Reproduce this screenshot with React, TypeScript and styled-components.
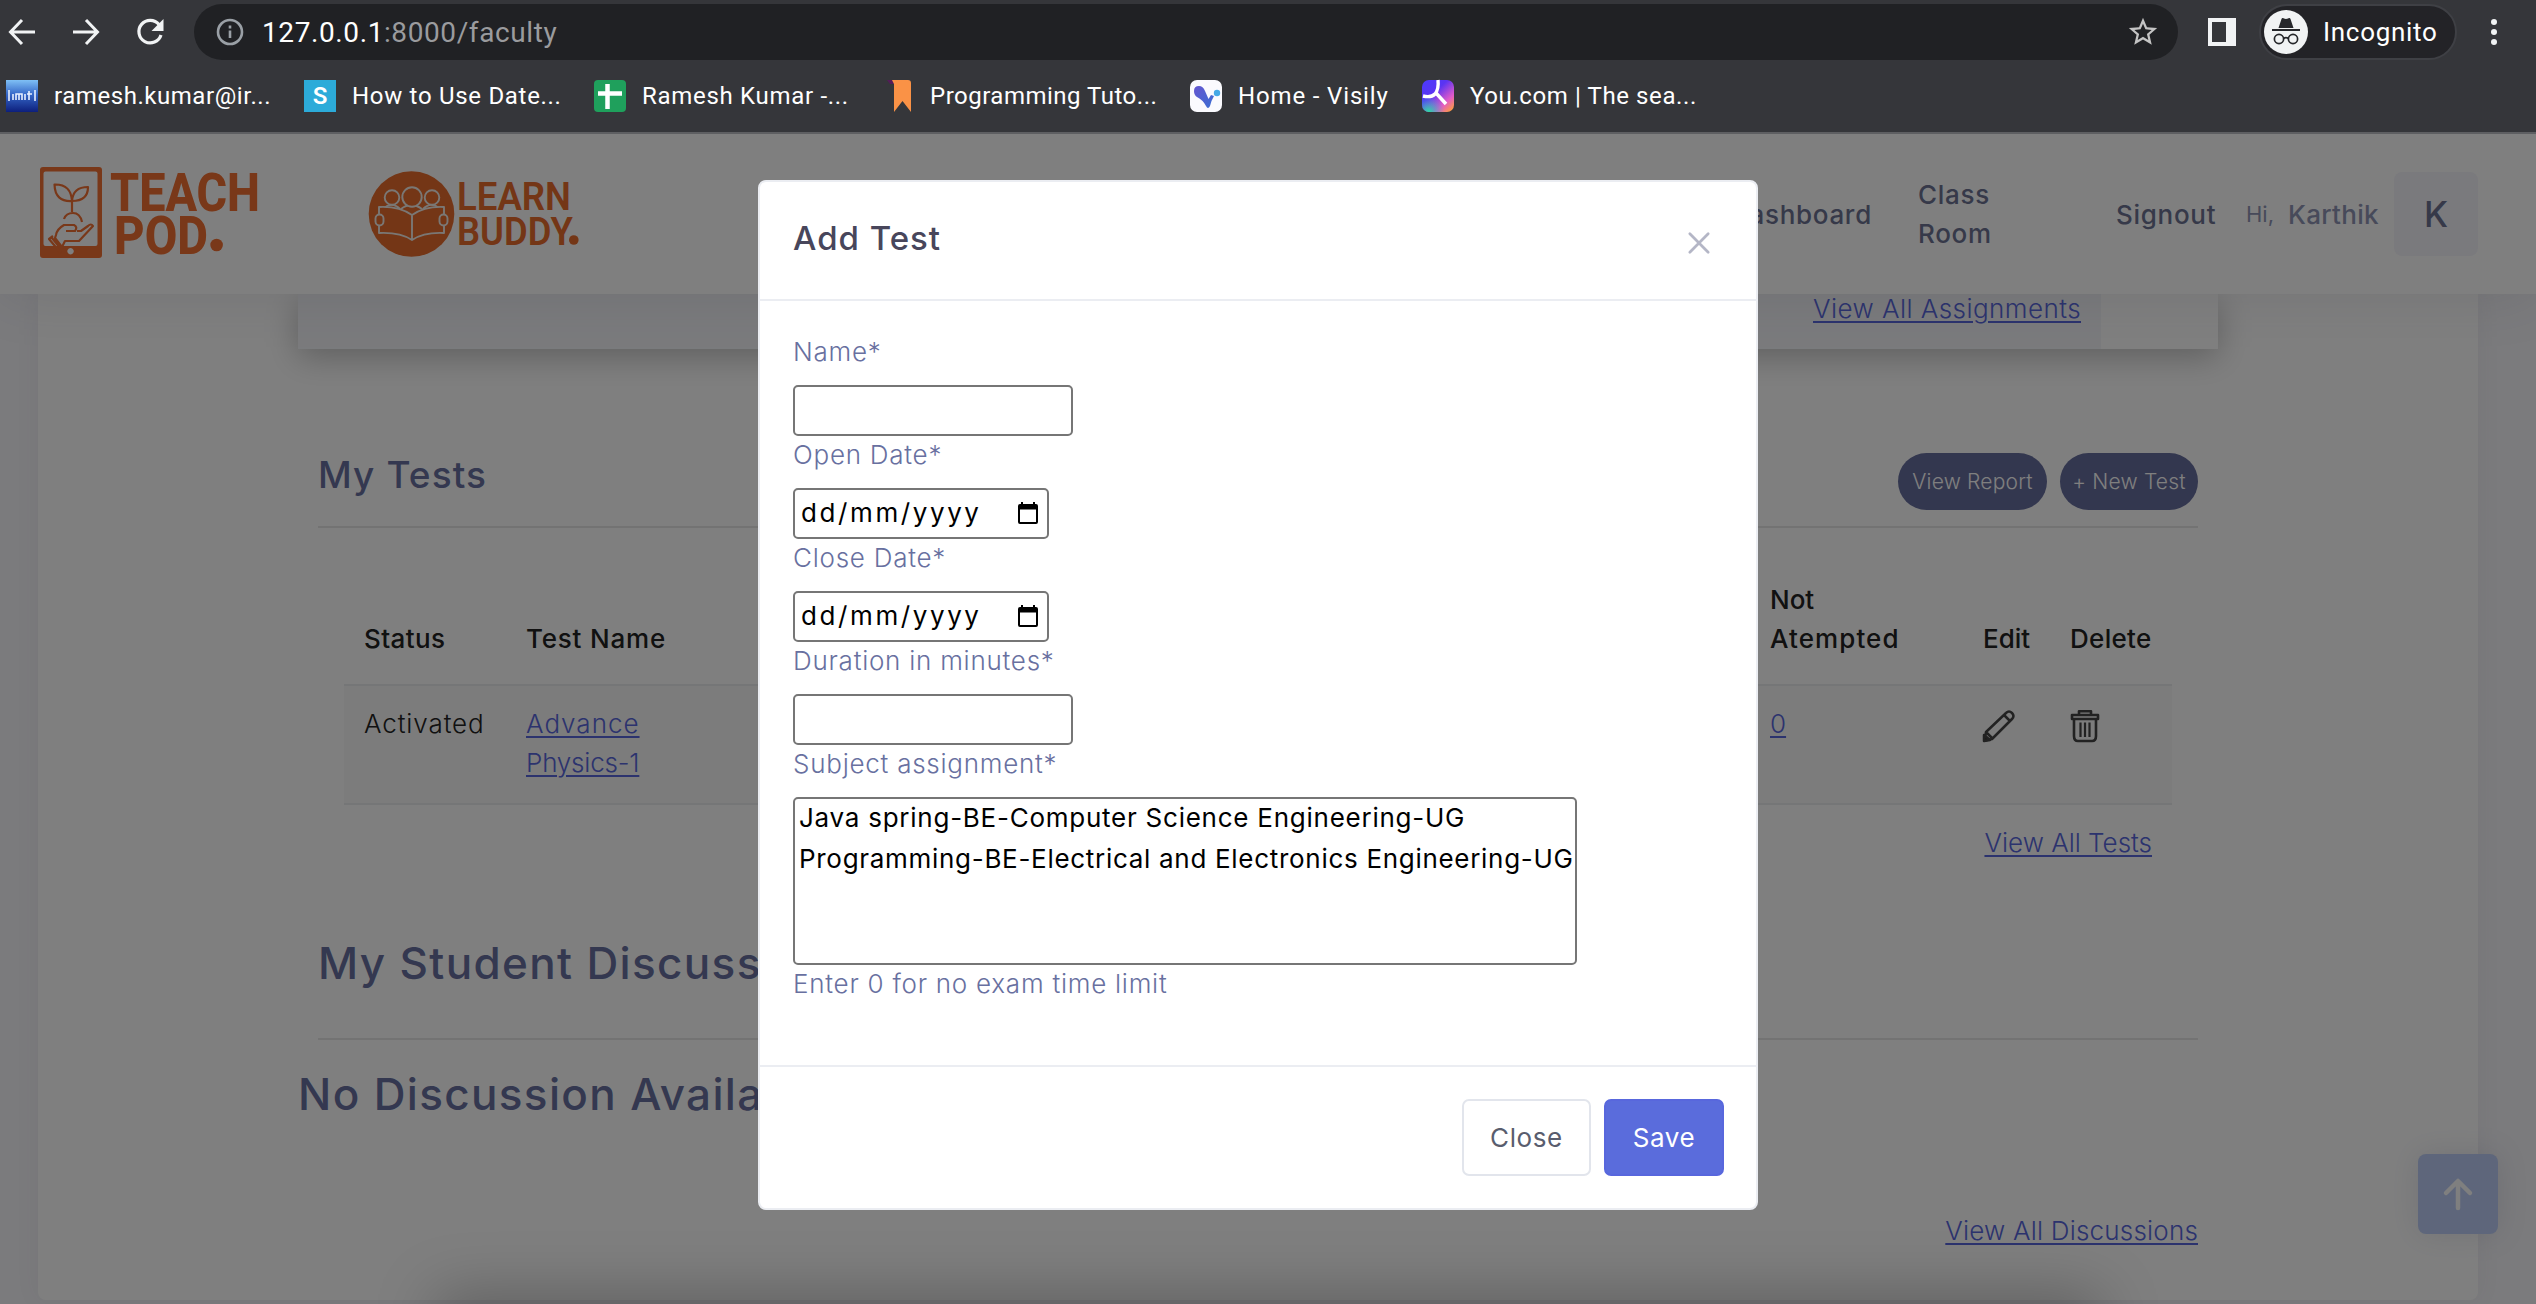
import React from "react";
import styled, { createGlobalStyle, css } from "styled-components";

const Global = createGlobalStyle`
  * { box-sizing: border-box; }
  html, body { margin: 0; padding: 0; }
  body { width: 2536px; height: 1304px; overflow: hidden; background: #f6f6fa; font-family: Inter, "Open Sans", sans-serif; font-size: 26px; }
  h1, h2, h3, p { margin: 0; }
  svg { display: block; flex: none; overflow: visible; }
`;

type TextProps = { $ls?: number; $size?: number; $weight?: number; $color?: string };

const Text = styled.span<TextProps>`
  display: inline-block;
  white-space: nowrap;
  font-size: ${(p) => p.$size ?? 26}px;
  font-weight: ${(p) => p.$weight ?? 400};
  letter-spacing: ${(p) => p.$ls ?? 0.7}px;
  color: ${(p) => p.$color ?? "inherit"};
`;

/* ---------- browser ---------- */
const Screen = styled.div`
  width: 2536px;
  height: 1304px;
  display: flex;
  flex-direction: column;
  overflow: hidden;
`;
const Chrome = styled.div`
  flex: none;
  height: 134px;
  background: #35363a;
  border-bottom: 2px solid #5e5f62;
  font-family: Roboto, sans-serif;
  color: #fff;
`;
const Toolbar = styled.div`
  display: flex;
  align-items: center;
  height: 64px;
  padding: 0 27px 0 6px;
`;
const NavIcons = styled.div`
  display: flex;
  gap: 32px;
  width: 188px;
`;
const Omnibox = styled.div`
  display: flex;
  align-items: center;
  width: 1984px;
  height: 56px;
  border-radius: 28px;
  background: #202124;
  padding: 0 18px 0 22px;
`;
const Url = styled.div`
  flex: 1;
  margin-left: 18px;
  font-size: 28px;
  letter-spacing: 0.6px;
  color: #9a9b9e;
  b { font-weight: 400; color: #fff; }
`;
const PanelIcon = styled.div`
  width: 28px;
  height: 28px;
  margin: 0 23px 0 30px;
  border: 4px solid #f1f3f4;
  border-right-width: 10px;
`;
const Incognito = styled.div`
  display: flex;
  align-items: center;
  width: 198px;
  height: 56px;
  border: 2px solid #3f4045;
  border-radius: 28px;
  background: #232327;
  padding-left: 3px;
  gap: 15px;
`;
const Menu = styled.div`
  margin-left: auto;
  display: grid;
  gap: 4px;
  padding-right: 12px;
  i { width: 6px; height: 6px; border-radius: 50%; background: #f1f3f4; }
`;
const Bookmarks = styled.div`
  display: flex;
  align-items: center;
  height: 64px;
  padding-left: 6px;
`;
const Bookmark = styled.div<{ $width: number }>`
  display: flex;
  align-items: center;
  gap: 16px;
  width: ${(p) => p.$width}px;
  white-space: nowrap;
`;

/* ---------- site ---------- */
const Site = styled.div`
  position: relative;
  flex: 1;
  overflow: hidden;
  display: flex;
  flex-direction: column;
`;
const Header = styled.header`
  position: relative;
  z-index: 1;
  flex: none;
  display: flex;
  align-items: center;
  height: 160px;
  padding: 0 58px 0 38px;
  background: #fff;
  color: #6c7293;
  box-shadow: 0 0 60px rgba(60, 60, 80, 0.12);
`;
const Nav = styled.nav`
  margin-left: auto;
  display: flex;
  align-items: center;
  line-height: 39px;
`;
const NavItem = styled.div<{ $left: number; $width: number }>`
  margin-left: ${(p) => p.$left}px;
  width: ${(p) => p.$width}px;
  display: flex;
  flex-direction: column;
`;
const Avatar = styled.div`
  display: grid;
  place-items: center;
  width: 84px;
  height: 84px;
  margin-left: 15px;
  border-radius: 8px;
  background: #f5f5fa;
`;
const Panel = styled.main`
  width: 2440px;
  height: 1006px;
  margin-left: 38px;
  padding: 0 260px;
  border-radius: 0 0 8px 8px;
  background: #fff;
  box-shadow: 0 0 26px rgba(82, 63, 105, 0.06);
`;
const AssignCard = styled.section`
  height: 55px;
  padding-right: 117px;
  background: #fff;
  box-shadow: 0 8px 32px rgba(0, 0, 0, 0.25);
`;
const AssignBody = styled.div`
  height: 55px;
  background: #f5f6fa;
  text-align: right;
  padding: 0 20px;
  line-height: 30px;
`;
const Link = styled.span<{ $ls?: number }>`
  font-size: 26px;
  font-weight: 300;
  letter-spacing: ${(p) => p.$ls ?? 0}px;
  color: #5867dd;
  text-decoration: underline;
  text-decoration-thickness: 2px;
  text-underline-offset: 3px;
  white-space: nowrap;
`;
const Section = styled.section`
  padding: 0 20px;
`;
const SectionHead = styled.div<{ $height: number; $pad: number }>`
  display: flex;
  justify-content: space-between;
  height: ${(p) => p.$height}px;
  padding-top: ${(p) => p.$pad}px;
  border-bottom: 2px solid #e6e6e6;
`;
const Heading = styled.h2<{ $size: number; $ls: number; $top?: number }>`
  margin-top: ${(p) => p.$top ?? 0}px;
  font-size: ${(p) => p.$size}px;
  font-weight: 500;
  letter-spacing: ${(p) => p.$ls}px;
  line-height: 60px;
  color: #6870a0;
  white-space: nowrap;
`;
const Pills = styled.div`
  display: flex;
  gap: 13px;
  margin-top: 8px;
`;
const Pill = styled.button<{ $width: number }>`
  width: ${(p) => p.$width}px;
  height: 57px;
  border: 0;
  padding: 0;
  border-radius: 29px;
  background: #676e9e;
  color: #fff;
  font: 300 21px Inter, sans-serif;
  letter-spacing: 0.2px;
  white-space: nowrap;
`;
const Table = styled.div`
  margin: 0 26px;
`;
const cols = css`
  display: grid;
  grid-template-columns: 162px 1244px 213px 87px 1fr;
  padding-left: 20px;
  line-height: 39px;
  color: #222;
`;
const HeadRow = styled.div`
  ${cols}
  height: 156px;
  align-items: end;
  padding-bottom: 26px;
`;
const Row = styled.div`
  ${cols}
  height: 121px;
  padding-top: 18px;
  background: #f8f8f8;
  border-top: 2px solid #ebedee;
  border-bottom: 2px solid #ebedee;
`;
const Cell = styled.div`
  display: flex;
  flex-direction: column;
  align-items: flex-start;
`;
const IconCell = styled.div`
  padding-top: 6px;
`;
const LinkRow = styled.div<{ $top: number; $right: number }>`
  display: flex;
  justify-content: flex-end;
  margin-top: ${(p) => p.$top}px;
  padding-right: ${(p) => p.$right}px;
  line-height: 39px;
`;
const Backdrop = styled.div`
  position: absolute;
  inset: 0;
  z-index: 2;
  background: rgba(0, 0, 0, 0.5);
`;
const ScrollTop = styled.div`
  position: absolute;
  left: 2418px;
  top: 1020px;
  width: 80px;
  height: 80px;
  display: grid;
  place-items: center;
  border-radius: 8px;
  background: #bccdf6;
  box-shadow: 0 0 30px rgba(80, 90, 130, 0.15);
`;
const BottomShade = styled.div`
  position: absolute;
  z-index: 2;
  left: 440px;
  right: 440px;
  bottom: -60px;
  height: 60px;
  box-shadow: 0 -6px 60px 4px rgba(0, 0, 0, 0.25);
`;

/* ---------- dialog ---------- */
const Dialog = styled.div`
  position: absolute;
  z-index: 3;
  left: 758px;
  top: 46px;
  width: 1000px;
  height: 1030px;
  display: flex;
  flex-direction: column;
  background: #fff;
  border: 2px solid #ebedf2;
  border-radius: 8px;
`;
const DialogHead = styled.div`
  display: flex;
  justify-content: space-between;
  height: 119px;
  padding: 36px 46px 0 33px;
  line-height: 40px;
  border-bottom: 2px solid #ebedf2;
  svg { margin-top: 14px; }
`;
const DialogBody = styled.form`
  flex: 1;
  padding: 32px 33px 0;
  color: #6870a0;
`;
const Label = styled.label`
  display: block;
  height: 39px;
  line-height: 37px;
  font-weight: 300;
  font-size: 26px;
  letter-spacing: 0.75px;
  white-space: nowrap;
`;
const Field = styled.div<{ $width: number }>`
  display: flex;
  align-items: center;
  justify-content: space-between;
  width: ${(p) => p.$width}px;
  height: 51px;
  margin: 13px 0 0;
  padding: 0 9px 2px 6px;
  border: 2px solid #767676;
  border-radius: 5px;
  color: #000;
`;
const ListBox = styled.div`
  width: 784px;
  height: 168px;
  margin: 13px 0 0;
  padding: 0 4px;
  border: 2px solid #767676;
  border-radius: 5px;
  color: #000;
`;
const Option = styled.div`
  height: 41px;
  line-height: 38px;
`;
const DialogFoot = styled.div`
  display: flex;
  justify-content: flex-end;
  gap: 13px;
  height: 143px;
  padding: 32px 32px 0 0;
  border-top: 2px solid #ebedf2;
`;
const Button = styled.button<{ $primary?: boolean; $width: number }>`
  width: ${(p) => p.$width}px;
  height: 77px;
  padding: 0;
  border: 2px solid ${(p) => (p.$primary ? "#5867dd" : "#e2e5ec")};
  border-radius: 7px;
  background: ${(p) => (p.$primary ? "#5a6cdc" : "#fff")};
  color: ${(p) => (p.$primary ? "#fff" : "#595d6e")};
  font-family: Inter, sans-serif;
`;

/* ---------- drawings ---------- */
const stroke = { fill: "none", strokeLinecap: "round", strokeLinejoin: "round" } as const;

const Back = () => (
  <svg width="32" height="32" viewBox="0 0 32 32" fill="none" stroke="#f1f3f4" strokeWidth="3">
    <path d="M29 16H5M16 4 4.500 16 16 28" />
  </svg>
);
const Forward = () => (
  <svg width="32" height="32" viewBox="0 0 32 32" fill="none" stroke="#f1f3f4" strokeWidth="3">
    <path d="M3 16h24M16 4l11.500 12L16 28" />
  </svg>
);
const Reload = () => (
  <svg width="32" height="32" viewBox="0 0 32 32">
    <path d="M25 8.500A11.300 11.300 0 1 0 27 19" fill="none" stroke="#f1f3f4" strokeWidth="3.200" />
    <path d="M29.500 3v12h-12z" fill="#f1f3f4" />
  </svg>
);
const Info = () => (
  <svg width="28" height="28" viewBox="0 0 28 28" fill="none" stroke="#9aa0a6" strokeWidth="2.600">
    <circle cx="14" cy="14" r="12" />
    <path d="M14 12.500V20M14 7.500v3" />
  </svg>
);
const Star = () => (
  <svg width="34" height="34" viewBox="0 0 24 24" fill="#c4c4c4">
    <path d="m22 9.240-7.190-.620L12 2 9.190 8.630 2 9.240l5.460 4.730L5.820 21 12 17.270 18.180 21l-1.630-7.030zM12 15.400l-3.760 2.270 1-4.280-3.320-2.880 4.380-.380L12 6.100l1.710 4.040 4.380.380-3.320 2.880 1 4.280z" />
  </svg>
);
const Spy = () => (
  <svg width="44" height="44" viewBox="0 0 44 44">
    <circle cx="22" cy="22" r="22" fill="#f1f3f4" />
    <path d="M14.500 18 17.500 9q.500-1.400 2-.700 2.500 1.200 5 0 1.500-.700 2 .700l3 9z" fill="#26272b" />
    <path d="M8 20h28" stroke="#26272b" strokeWidth="2" />
    <g fill="none" stroke="#26272b" strokeWidth="1.700">
      <circle cx="15" cy="29" r="4.600" />
      <circle cx="29" cy="29" r="4.600" />
      <path d="M19.500 28.500q2.500-1.800 5 0" />
    </g>
  </svg>
);
const IrIcon = () => (
  <svg width="32" height="32" viewBox="0 0 32 32">
    <defs>
      <linearGradient id="ir" x1="0" y1="0" x2="0" y2="1">
        <stop offset="0" stopColor="#7fc0f5" />
        <stop offset=".45" stopColor="#3567c8" />
        <stop offset="1" stopColor="#0d1f7c" />
      </linearGradient>
    </defs>
    <rect width="32" height="32" fill="url(#ir)" />
    <path d="M3 10v11M29 10v11M7 20v-6M10 20v-6h6v6M13 14v6M19 20v-6M23 20v-9M21 14h5" fill="none" stroke="#e7efff" strokeWidth="1.600" />
  </svg>
);
const Tile = styled.div`
  display: grid;
  place-items: center;
  width: 32px;
  height: 32px;
  background: #2cabd9;
  font-weight: 600;
  font-size: 24px;
`;
const SheetIcon = () => (
  <svg width="32" height="32" viewBox="0 0 32 32">
    <rect width="32" height="32" rx="4" fill="#1fa05c" />
    <path d="M13.500 4v25M4 13.500h24" stroke="#fff" strokeWidth="4.500" />
  </svg>
);
const RibbonIcon = () => (
  <svg width="27" height="32" viewBox="0 0 27 32">
    <path d="M0 0h7v4H3z" fill="#541c58" />
    <path d="M5 0h16q3 0 3 3v29l-8.500-11L7 32V4z" fill="#fa9246" />
  </svg>
);
const VisilyIcon = () => (
  <svg width="32" height="32" viewBox="0 0 32 32">
    <defs>
      <linearGradient id="vi" x1="0" y1="0" x2="1" y2="1">
        <stop offset="0" stopColor="#6455d0" />
        <stop offset="1" stopColor="#3a6ed2" />
      </linearGradient>
    </defs>
    <rect width="32" height="32" rx="7" fill="#fafafe" />
    <path d="M4 11q0-5 5-5 4 0 6 5l3.500 8 2.500-4 3 1q-3 5-4 10-2 4-4 0-3-6-9-9-3-2-3-6z" fill="url(#vi)" />
    <circle cx="27" cy="13" r="3.200" fill="#45a9e6" />
  </svg>
);
const YouIcon = () => (
  <svg width="32" height="32" viewBox="0 0 32 32">
    <defs>
      <linearGradient id="yo" x1="0" y1="0" x2=".9" y2="1">
        <stop offset="0" stopColor="#4a3bff" />
        <stop offset=".4" stopColor="#5a34f2" />
        <stop offset=".75" stopColor="#e15ac8" />
        <stop offset="1" stopColor="#ff9f3c" />
      </linearGradient>
      <radialGradient id="yg" cx=".2" cy="1" r=".5">
        <stop offset="0" stopColor="#25e0a0" />
        <stop offset="1" stopColor="#25a0e0" stopOpacity="0" />
      </radialGradient>
    </defs>
    <rect width="32" height="32" rx="7" fill="url(#yo)" />
    <rect width="32" height="32" rx="7" fill="url(#yg)" />
    <path d="M16 0q1 9-3 14-4 4-12 2M14 13l10 11" fill="none" stroke="#fff" strokeWidth="3.400" />
  </svg>
);
const TeachLogo = () => (
  <svg width="224" height="100" viewBox="38 164 224 100" fill="none" stroke="#f37032" strokeLinejoin="round">
    <path fill="#f37032" stroke="none" fillRule="evenodd" d="M43 167h56q3 0 3 3v85q0 3-3 3H43q-3 0-3-3v-85q0-3 3-3zm2.500 4.500q-2 0-2 2V244q0 2 2 2h50q2 0 2-2v-70.500q0-2-2-2zM70.500 248a3.200 3.200 0 1 0 .1 0z" />
    <g strokeWidth="2.200">
      <path d="M72 212v-11q-17 1-17.500-16.500Q71 184 72 201q1-14 16-14 0 14-16 14M64 219q2-6 9-6t9 9" />
      <path d="M66 231h9q3-4-1-6H64q-7 4-8 10l-1 3 7 9 3-6h14l14-15q-2-3-5 0l-7 5h-4M53 236l-4 3 11 13 3-6M52 238l9 11" />
    </g>
    <g fill="#f37032" stroke="none" fontFamily="Roboto, sans-serif" fontWeight="800" fontSize="53">
      <text x="110" y="210.500" textLength="150" lengthAdjust="spacingAndGlyphs">TEACH</text>
      <text x="114" y="253.500" textLength="94" lengthAdjust="spacingAndGlyphs">POD</text>
      <circle cx="216.600" cy="245" r="6.300" />
    </g>
  </svg>
);
const LearnLogo = () => (
  <svg width="214" height="90" viewBox="367 169 214 90">
    <circle cx="411.500" cy="214" r="42.800" fill="#e86c2c" />
    <g fill="#e86c2c" stroke="#f4efe9" strokeWidth="1.900" strokeLinejoin="round">
      <path d="M384 208q8-7 16 1M423 209q8-8 16-1M401 209q10-8 21 0" />
      <circle cx="392" cy="197.500" r="7.300" />
      <circle cx="432" cy="197.500" r="7.300" />
      <circle cx="412" cy="197" r="9.700" />
      <path d="M379 207q20-1 33 8 13-9 32-8v26q-20-1-32 7-12-8-33-7zM412 215v25" />
      <rect x="375.500" y="214.500" width="8" height="11" rx="4" />
      <rect x="439.500" y="214.500" width="8" height="11" rx="4" />
    </g>
    <g fill="#e86c2c" fontFamily="Roboto, sans-serif" fontWeight="600" fontSize="38">
      <text x="457" y="210" textLength="114" lengthAdjust="spacingAndGlyphs">LEARN</text>
      <text x="457" y="244.500" textLength="116" lengthAdjust="spacingAndGlyphs">BUDDY</text>
      <circle cx="573.800" cy="240" r="4.800" />
    </g>
  </svg>
);
const Logos = styled.div`
  display: flex;
  align-items: center;
  gap: 105px;
`;
const Pencil = () => (
  <svg width="32" height="32" viewBox="0 0 32 32" fill="none" stroke="#444" strokeWidth="2.500" strokeLinejoin="round">
    <path d="M1.500 30.500 3 22 23 3q3-3 6 0t0 6L9 29zM21 5l6 6M3 22l7 7" />
    <path d="M1 31v-6l6 5z" fill="#333" />
  </svg>
);
const Trash = () => (
  <svg width="30" height="32" viewBox="0 0 30 32" fill="none" stroke="#444" strokeWidth="2.600" strokeLinejoin="round">
    <path d="M2 5h26v4H2zM9 5V1.300h12V5M4 9v17q0 5 4 5h14q4 0 4-5V9" />
    <path d="M10.500 12.500V27M15 12.500V27M19.500 12.500V27" strokeWidth="2.200" />
  </svg>
);
const Calendar = () => (
  <svg width="20" height="22" viewBox="0 0 20 22">
    <path fill="#000" fillRule="evenodd" d="M3 0h2v2h10V0h2v2h1q2 0 2 2v16q0 2-2 2H2q-2 0-2-2V4q0-2 2-2h1zM2 7.500V20h16V7.500z" />
  </svg>
);

const bookmarks = [
  { icon: <IrIcon />, label: "ramesh.kumar@ir...", width: 298, ls: 0.55 },
  { icon: <Tile>S</Tile>, label: "How to Use Date...", width: 290, ls: 0.7 },
  { icon: <SheetIcon />, label: "Ramesh Kumar -...", width: 293, ls: 0.7 },
  { icon: <RibbonIcon />, label: "Programming Tuto...", width: 303, ls: 0.5 },
  { icon: <VisilyIcon />, label: "Home - Visily", width: 232, ls: 0.85 },
  { icon: <YouIcon />, label: "You.com | The sea...", width: 300, ls: 0.6 },
];

export default function App() {
  return (
    <Screen>
      <Global />
      <Chrome>
        <Toolbar>
          <NavIcons><Back /><Forward /><Reload /></NavIcons>
          <Omnibox>
            <Info />
            <Url><b>127.0.0.1</b>:8000/faculty</Url>
            <Star />
          </Omnibox>
          <PanelIcon />
          <Incognito><Spy /><Text>Incognito</Text></Incognito>
          <Menu><i /><i /><i /></Menu>
        </Toolbar>
        <Bookmarks>
          {bookmarks.map((b) => (
            <Bookmark key={b.label} $width={b.width}>
              {b.icon}
              <Text $size={24} $ls={b.ls}>{b.label}</Text>
            </Bookmark>
          ))}
        </Bookmarks>
      </Chrome>
      <Site>
        <Header>
          <Logos><TeachLogo /><LearnLogo /></Logos>
          <Nav>
            <NavItem $left={0} $width={142}><Text $weight={500}>Dashboard</Text></NavItem>
            <NavItem $left={46} $width={80}>
              <Text $weight={500}>Class</Text>
              <Text $weight={500}>Room</Text>
            </NavItem>
            <NavItem $left={118} $width={99}><Text $weight={500}>Signout</Text></NavItem>
            <NavItem $left={31} $width={27}><Text $size={22} $ls={0} $color="#8f94b4">Hi,</Text></NavItem>
            <NavItem $left={15} $width={91}><Text $weight={500} $ls={0.3} $color="#8f94b4">Karthik</Text></NavItem>
            <Avatar><Text $size={35} $weight={500} $ls={0}>K</Text></Avatar>
          </Nav>
        </Header>
        <Panel>
          <AssignCard>
            <AssignBody><Link $ls={0.45}>View All Assignments</Link></AssignBody>
          </AssignCard>
          <Section>
            <SectionHead $height={179} $pad={96}>
              <Heading $size={37} $ls={1.1}>My Tests</Heading>
              <Pills>
                <Pill $width={149}>View Report</Pill>
                <Pill $width={138}>+ New Test</Pill>
              </Pills>
            </SectionHead>
            <Table>
              <HeadRow>
                <Text $weight={500} $ls={0.4}>Status</Text>
                <Text $weight={500} $ls={0.8}>Test Name</Text>
                <Cell>
                  <Text $weight={500} $ls={0}>Not</Text>
                  <Text $weight={500} $ls={1.1}>Atempted</Text>
                </Cell>
                <Text $weight={500} $ls={0}>Edit</Text>
                <Text $weight={500} $ls={0.3}>Delete</Text>
              </HeadRow>
              <Row>
                <Text $weight={300} $ls={0.9}>Activated</Text>
                <Cell><Link $ls={1}>Advance</Link><Link $ls={-0.2}>Physics-1</Link></Cell>
                <Link>0</Link>
                <IconCell><Pencil /></IconCell>
                <IconCell><Trash /></IconCell>
              </Row>
            </Table>
            <LinkRow $top={18} $right={46}><Link>View All Tests</Link></LinkRow>
            <SectionHead $height={178} $pad={71}>
              <Heading $size={44} $ls={1.35}>My Student Discussions</Heading>
            </SectionHead>
          </Section>
          <Heading $size={44} $ls={1.35} $top={24}>No Discussion Available</Heading>
          <LinkRow $top={87} $right={20}><Link $ls={0.2}>View All Discussions</Link></LinkRow>
        </Panel>
        <ScrollTop>
          <svg width="32" height="32" viewBox="0 0 32 32" {...stroke} stroke="#fff" strokeWidth="4.500">
            <path d="M16 30V4M4 15 16 3l12 12" />
          </svg>
        </ScrollTop>
        <Backdrop />
        <BottomShade />
        <Dialog>
          <DialogHead>
            <Text $size={33} $weight={500} $ls={1} $color="#48465b">Add Test</Text>
            <svg width="22" height="22" viewBox="0 0 24 24" {...stroke} stroke="#b4b6c6" strokeWidth="3">
              <path d="M2 2l20 20M22 2 2 22" />
            </svg>
          </DialogHead>
          <DialogBody>
            <Label>Name*</Label>
            <Field $width={280} />
            <Label>Open Date*</Label>
            <Field $width={256}><Text $ls={2.6}>dd/mm/yyyy</Text><Calendar /></Field>
            <Label>Close Date*</Label>
            <Field $width={256}><Text $ls={2.6}>dd/mm/yyyy</Text><Calendar /></Field>
            <Label>Duration in minutes*</Label>
            <Field $width={280} />
            <Label>Subject assignment*</Label>
            <ListBox>
              <Option><Text $ls={0.75}>Java spring-BE-Computer Science Engineering-UG</Text></Option>
              <Option><Text>Programming-BE-Electrical and Electronics Engineering-UG</Text></Option>
            </ListBox>
            <Label>Enter 0 for no exam time limit</Label>
          </DialogBody>
          <DialogFoot>
            <Button $width={129}><Text $ls={0.6}>Close</Text></Button>
            <Button $width={120} $primary><Text $ls={0.6}>Save</Text></Button>
          </DialogFoot>
        </Dialog>
      </Site>
    </Screen>
  );
}
